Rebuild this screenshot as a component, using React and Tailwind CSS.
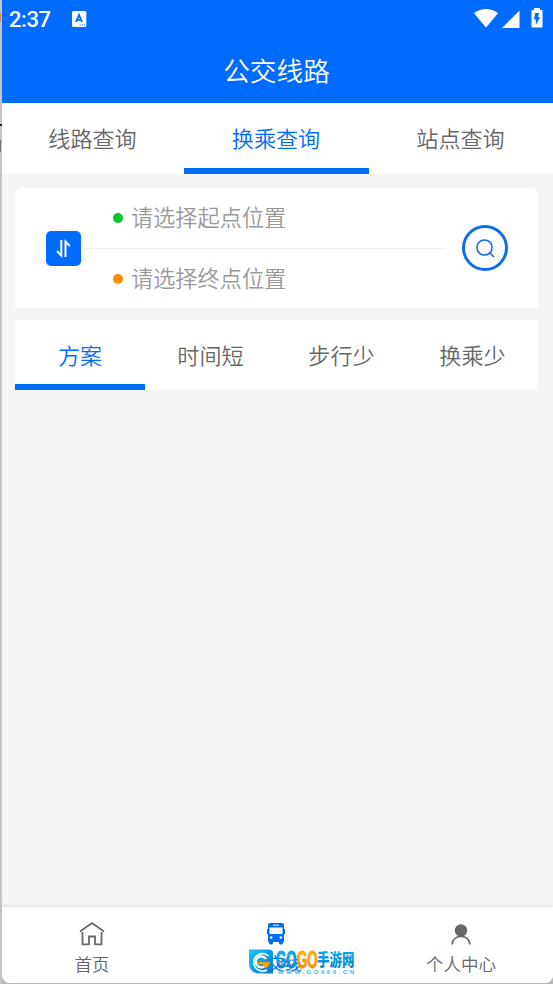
import React from 'react';

const modes = ['线路查询', '换乘查询', '站点查询'];
const sorts = ['方案', '时间短', '步行少', '换乘少'];

function StatusBar() {
  return (
    <div className="flex h-[38px] items-center pl-[7px] pr-[10px] text-white">
      <span className="mt-[2px] w-[42px] font-[Roboto] text-[22px] leading-none font-medium tracking-[-0.4px] whitespace-nowrap">2:37</span>
      <svg className="ml-[21px]" width="15" height="16" viewBox="0 0 15 16">
        <rect width="14.3" height="16" rx="1.5" fill="white" />
        <path d="M4 11 7 3.8 10 11M5.2 8.8h3.8" fill="none" stroke="#006cff" strokeWidth="1.8" />
        <path d="M7.5 14h1.3M9.8 14h1.3M12 14h1.2" stroke="#006cff" strokeWidth="1" />
      </svg>
      <svg className="mt-[-1px] ml-auto" width="24" height="19" viewBox="0 0 24 19" fill="white">
        <path d="M0 4.2Q12-4.200 24 4.200L12 18.500Z" />
      </svg>
      <svg className="ml-1" width="18" height="18" viewBox="0 0 18 18" fill="white">
        <path d="M17.500 .5v17.500H0Z" />
      </svg>
      <svg className="mt-[-2px] ml-[11px]" width="12" height="20" viewBox="0 0 12 20">
        <path d="M3 0h6v2h1.500Q11.500 2 11.500 3v15.500q0 1-1 1h-9q-1 0-1-1V3q0-1 1-1H3Z" fill="white" />
        <path d="M4.200 5H8L7 9h2.200L4.800 17V11.500H3Z" fill="#006cff" />
      </svg>
    </div>
  );
}

function Place({ dot, children }) {
  return (
    <div className="flex h-[60px] items-center text-[22.200px] text-[#999]">
      <i className={`mr-[9px] size-[10px] rounded-full ${dot}`} />
      <span className="-mt-px -ml-px">{children}</span>
    </div>
  );
}

function Watermark() {
  return (
    <div className="absolute top-[42px] left-[65px] flex h-[27px] w-[108px]">
      <svg width="25" height="26" viewBox="0 0 25 26">
        <defs>
          <linearGradient id="badge" x2="1" y2="1">
            <stop stopColor="#17c5f5" />
            <stop offset="1" stopColor="#087ace" />
          </linearGradient>
          <linearGradient id="blueLetters" x2="0" y2="1">
            <stop stopColor="#15b9ed" />
            <stop offset="1" stopColor="#0878c8" />
          </linearGradient>
          <linearGradient id="orangeLetters" x2="0" y2="1">
            <stop stopColor="#ffb900" />
            <stop offset="1" stopColor="#ff8500" />
          </linearGradient>
        </defs>
        <path d="M0 .5h20q4 0 4 4v20H11Q0 24 0 14Z" fill="url(#badge)" />
        <path d="M19.500 7A8.800 8.800 0 1 0 18 21" fill="none" stroke="white" strokeWidth="1.600" />
        <path d="M17 10a5.500 5.500 0 1 0-1 7" fill="none" stroke="white" strokeWidth="2.300" />
        <path d="M9 13h12q-1 6-6 6l1-3-7-1Z" fill="#ff9d00" />
      </svg>
      <div className="ml-[2px] w-[80px]">
        <svg className="overflow-visible" width="80" height="19" viewBox="0 0 80 19">
          <text x="0" y="18.500" textLength="20.500" lengthAdjust="spacingAndGlyphs" fontFamily="Liberation Sans" fontWeight="900" fontSize="24" fill="url(#blueLetters)" stroke="url(#blueLetters)" strokeWidth="1">GO</text>
          <text x="21" y="18.500" textLength="20.500" lengthAdjust="spacingAndGlyphs" fontFamily="Liberation Sans" fontWeight="900" fontSize="24" fill="url(#orangeLetters)" stroke="url(#orangeLetters)" strokeWidth="1">GO</text>
          <text x="41" y="16.500" textLength="37.500" lengthAdjust="spacingAndGlyphs" fontFamily="Noto Sans CJK SC" fontWeight="900" fontSize="17" fill="url(#blueLetters)">手游网</text>
        </svg>
        <svg className="overflow-visible" width="80" height="7" viewBox="0 0 80 7">
          <text x="2" y="5.500" textLength="76" fontFamily="Liberation Sans" fontWeight="700" fontSize="6" fill="#38b8ed">WWW.GO960.CN</text>
        </svg>
      </div>
    </div>
  );
}

export default function App() {
  return (
    <div className="flex h-[984px] w-[553px] overflow-hidden bg-[#b8b8b8] font-['Noto_Sans_CJK_SC',sans-serif] font-[350]">
      <div className="w-[2px] shrink-0 bg-[#c4c4c4]">
        <div className="mt-[13px] h-[9px] w-px bg-[#d88755]" />
        <div className="mt-[102px] h-[2px] bg-[#222]" />
        <div className="mt-[14px] h-[12px] w-px bg-[#777]" />
      </div>
      <div className="flex h-[983px] w-[551px] flex-col overflow-hidden rounded-b-[8px] bg-[#f5f5f5]">
        <header className="h-[103px] shrink-0 bg-[#006cff]">
          <StatusBar />
          <h1 className="flex h-[64px] items-center justify-center pr-[2px] text-[26.700px] text-white">公交线路</h1>
        </header>
        <nav className="grid h-[71px] shrink-0 grid-cols-[182px_185px_184px] bg-white text-[22.100px]">
          {modes.map((name, i) => (
            <button key={name} className={`flex items-center justify-center border-b-[6px] pt-[5px] pr-px ${i === 1 ? 'border-b-[#006cff] text-[#006cff]' : 'border-b-transparent text-[#666]'}`}>{name}</button>
          ))}
        </nav>
        <section className="mt-[14px] mr-[15px] ml-[13px] flex h-[120px] shrink-0 items-center rounded-t-[8px] bg-white">
          <button className="ml-[31px] flex size-[35px] items-center justify-center rounded-[5px] bg-[#006cff]">
            <svg width="17" height="19" viewBox="0 0 17 19" fill="none" stroke="white" strokeWidth="2">
              <path d="M6.300 1v15.500L2 12M10.500 18V2.500l4.300 4.500" />
            </svg>
          </button>
          <div className="ml-[3px] w-[361px]">
            <div className="pl-[29px]"><Place dot="bg-[#00c52b]">请选择起点位置</Place></div>
            <div className="h-px bg-[#eee]" />
            <div className="pl-[29px]"><Place dot="bg-[#ff8c00]">请选择终点位置</Place></div>
          </div>
          <button className="ml-[17px] flex size-[46px] items-center justify-center rounded-full border-[3px] border-[#0b6de8]">
            <svg width="20" height="20" viewBox="0 0 20 20" fill="none" stroke="#0b6de8" strokeWidth="1.500">
              <circle cx="9.500" cy="9.500" r="7.600" />
              <path d="m14.500 14.500 4.500 4.500" />
            </svg>
          </button>
        </section>
        <nav className="mt-[12px] mr-[15px] ml-[13px] grid h-[70px] shrink-0 grid-cols-[130px_131px_131px_131px] bg-white text-[22.100px]">
          {sorts.map((name, i) => (
            <button key={name} className={`flex items-center justify-center border-b-[6px] pt-[5px] ${i === 0 ? 'border-b-[#006cff] text-[#006cff]' : 'border-b-transparent text-[#666]'}`}>{name}</button>
          ))}
        </nav>
        <footer className="mt-auto grid h-[76px] shrink-0 grid-cols-[182px_183px_186px] bg-white text-[17.500px] leading-[26px] text-[#666] shadow-[0_-1px_3px_#ddd]">
          <div className="flex flex-col items-center pt-[14px] pr-[2px]">
            <svg width="26" height="26" viewBox="0 0 26 26" fill="none" stroke="#666" strokeWidth="1.800">
              <path d="M1 10.500 13 2l12 8.500M3.500 11v12.300H10V15.500h6v7.800h6.500V11" />
            </svg>
            <span className="mt-1">首页</span>
          </div>
          <div className="relative flex flex-col items-center pt-[15px]">
            <svg width="20" height="24" viewBox="0 0 20 24">
              <path d="M4 1h12q2 0 2 2v17h-1v1q0 1.500-2 1.500t-2-1.500v-1H7v1q0 1.500-2 1.500T3 21v-1H2V3q0-2 2-2Z" fill="#006cff" />
              <path d="M3.500 5.500h13v6.500h-13ZM7 2.700h6v1H7Z" fill="white" />
              <path d="M1 7h1v5H1ZM18 7h1v5h-1Z" fill="#006cff" />
              <circle cx="5.200" cy="15.500" r="1.300" fill="white" />
              <circle cx="14.800" cy="15.500" r="1.300" fill="white" />
            </svg>
            <span className="mt-1 text-[#006cff]">公交线</span>
            <Watermark />
          </div>
          <div className="flex flex-col items-center pt-[16px] pl-[2px]">
            <svg width="22" height="23" viewBox="0 0 22 23">
              <circle cx="11" cy="7.500" r="6.200" fill="#666" />
              <path d="M2 21.500q1-8 9-8t9 8" fill="none" stroke="#666" strokeWidth="1.700" />
            </svg>
            <span className="mt-[5px]">个人中心</span>
          </div>
        </footer>
      </div>
    </div>
  );
}
